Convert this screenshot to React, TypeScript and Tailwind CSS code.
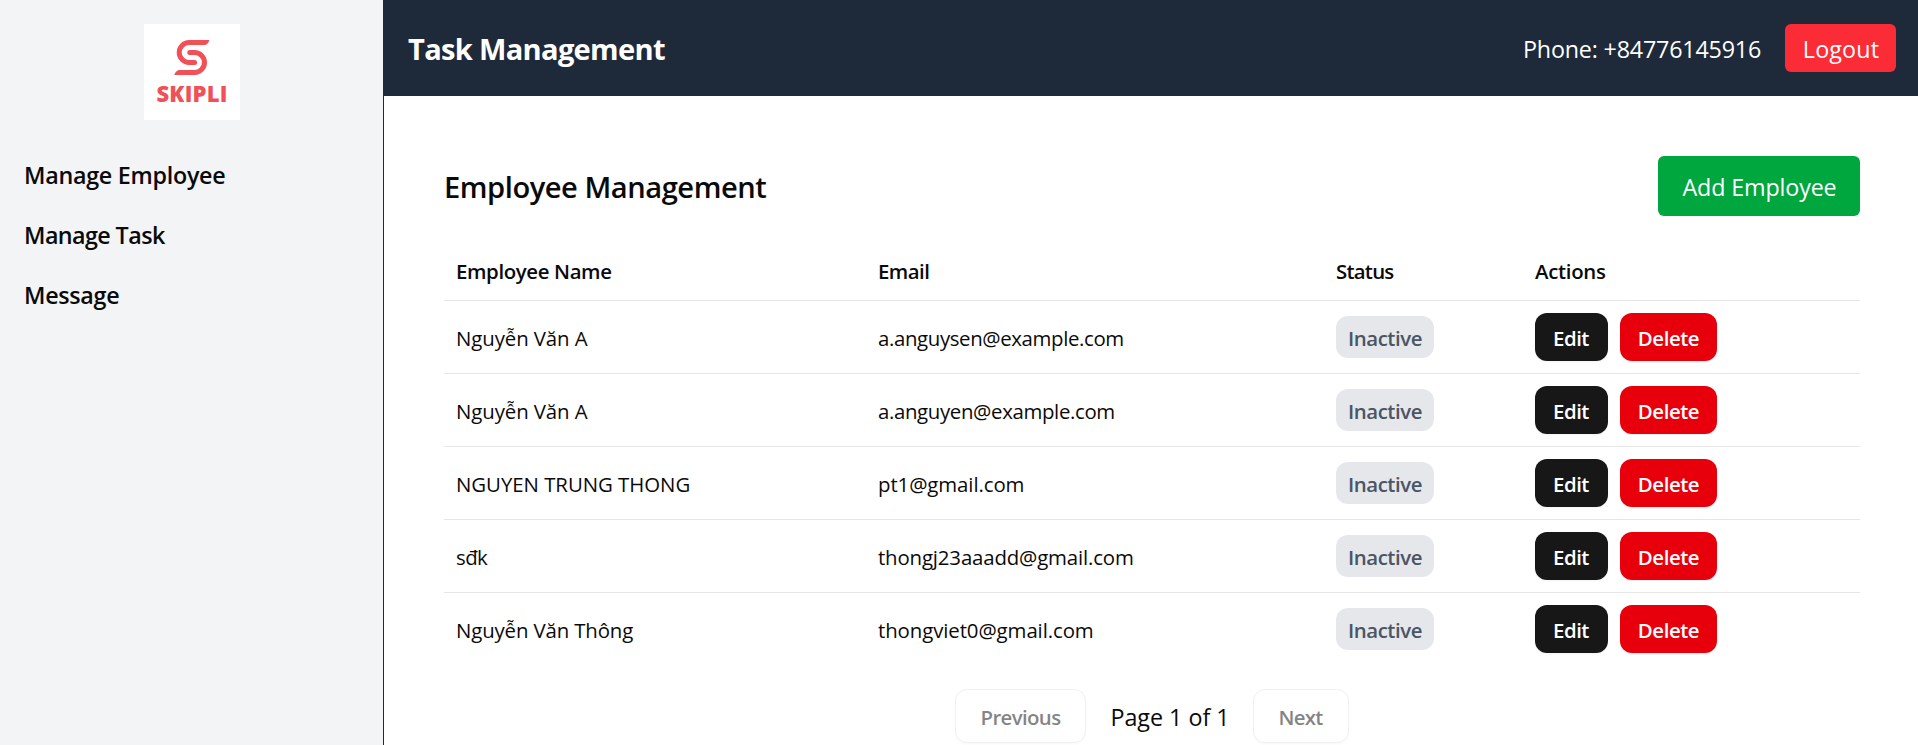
type Employee = {
  name: string;
  nameTracking: string;
  email: string;
  emailTracking: string;
};

const navItems = [
  { label: "Manage Employee", tracking: "tracking-[-0.27px]" },
  { label: "Manage Task", tracking: "tracking-[-0.58px]" },
  { label: "Message", tracking: "tracking-[-0.3px]" },
];

const columns = [
  { label: "Employee Name", tracking: "tracking-[-0.37px]" },
  { label: "Email", tracking: "tracking-[-0.52px]" },
  { label: "Status", tracking: "tracking-[-0.75px]" },
  { label: "Actions", tracking: "tracking-[-0.3px]" },
];

const employees: Employee[] = [
  {
    name: "Nguyễn Văn A",
    nameTracking: "tracking-[-0.09px]",
    email: "a.anguysen@example.com",
    emailTracking: "tracking-[-0.37px]",
  },
  {
    name: "Nguyễn Văn A",
    nameTracking: "tracking-[-0.09px]",
    email: "a.anguyen@example.com",
    emailTracking: "tracking-[-0.35px]",
  },
  {
    name: "NGUYEN TRUNG THONG",
    nameTracking: "tracking-[-0.04px]",
    email: "pt1@gmail.com",
    emailTracking: "tracking-[-0.09px]",
  },
  {
    name: "sđk",
    nameTracking: "tracking-[-0.59px]",
    email: "thongj23aaadd@gmail.com",
    emailTracking: "tracking-[-0.15px]",
  },
  {
    name: "Nguyễn Văn Thông",
    nameTracking: "tracking-[-0.13px]",
    email: "thongviet0@gmail.com",
    emailTracking: "tracking-[-0.09px]",
  },
];

const gridColumns = "grid grid-cols-[422px_458px_199px_337px] items-center";

function Logo() {
  return (
    <div className="flex h-24 w-24 flex-col items-center bg-white pt-4">
      <svg width="36" height="35" viewBox="30 16 36 35" fill="none">
        <path
          d="M61 18.5H45.2a10 10 0 0 0 0 20H50.6M45.8 28.5H50.5a10 10 0 0 1 0 20H35"
          stroke="#f05056"
          strokeWidth="5"
        />
        <path
          d="M60.5 16H65.4C64.6 19 62.8 21 60 21ZM35.5 51H30.2C31.2 48 33 46 36 46Z"
          fill="#f05056"
        />
        <circle cx="50.6" cy="38.5" r="2.5" fill="#f05056" />
        <circle cx="45.8" cy="28.5" r="2.5" fill="#f05056" />
      </svg>
      <span className="mt-1.5 pl-px text-[22px] leading-6 font-extrabold tracking-[0.2px] text-[#f05056]">
        SKIPLI
      </span>
    </div>
  );
}

function Sidebar() {
  return (
    <aside className="flex w-96 shrink-0 flex-col border-r border-gray-800 bg-gray-100 p-6">
      <div className="flex justify-center">
        <Logo />
      </div>
      <nav className="mt-[37px] flex flex-col gap-6">
        {navItems.map((item) => (
          <a
            key={item.label}
            className={`h-9 text-[23.3px] leading-9 font-semibold ${item.tracking}`}
          >
            {item.label}
          </a>
        ))}
      </nav>
    </aside>
  );
}

function Header() {
  return (
    <header className="flex h-24 items-center justify-between bg-gray-800 pr-[22px] pl-6 text-white">
      <h1 className="pt-0.5 text-[29.1px] leading-10 font-bold tracking-[-0.7px]">
        Task Management
      </h1>
      <div className="flex items-center">
        <span className="mr-6 w-[238px] pt-0.5 text-[23.3px] leading-9 tracking-[-0.19px] whitespace-nowrap">
          Phone: +84776145916
        </span>
        <button className="h-12 w-[111px] rounded-md bg-[#fb2c36] pt-0.5 pl-px text-[23.3px] tracking-[0.15px]">
          Logout
        </button>
      </div>
    </header>
  );
}

function Row({ employee, last }: { employee: Employee; last: boolean }) {
  return (
    <div className={`${gridColumns} border-[#e5e5e5] ${last ? "h-[72px]" : "h-[73px] border-b"}`}>
      <span className={`pt-0.5 pl-3 ${employee.nameTracking}`}>{employee.name}</span>
      <span className={`pt-0.5 pl-3 ${employee.emailTracking}`}>{employee.email}</span>
      <div className="pl-3">
        <span className="flex h-[42px] w-[98px] items-center justify-center rounded-xl bg-gray-200 pt-0.5 font-semibold tracking-[-0.45px] text-gray-600">
          Inactive
        </span>
      </div>
      <div className="flex gap-3 pl-3 font-semibold text-white">
        <button className="h-12 w-[73px] rounded-xl bg-[#171717] pt-0.5 pr-px tracking-[-0.5px] shadow-xs">
          Edit
        </button>
        <button className="h-12 w-[97px] rounded-xl bg-[#e7000b] pt-0.5 tracking-[-0.42px] shadow-xs">
          Delete
        </button>
      </div>
    </div>
  );
}

function Pagination() {
  return (
    <div className="mt-6 ml-[511px] flex items-center">
      <button
        disabled
        className="h-[54px] w-[131px] rounded-xl border border-[#e5e5e5] bg-white pt-0.5 font-semibold tracking-[-0.64px] opacity-50 shadow-xs"
      >
        Previous
      </button>
      <span className="w-[167px] pt-0.5 pl-px text-center text-[23.3px] tracking-[-0.02px]">
        Page 1 of 1
      </span>
      <button
        disabled
        className="h-[54px] w-24 rounded-xl border border-[#e5e5e5] bg-white pt-0.5 pr-px font-semibold tracking-[-0.8px] opacity-50 shadow-xs"
      >
        Next
      </button>
    </div>
  );
}

export default function App() {
  return (
    <div className="flex h-[745px] w-full overflow-hidden bg-white font-['Open_Sans','Noto_Sans',sans-serif] text-[#0a0a0a]">
      <Sidebar />
      <div className="flex min-w-0 flex-1 flex-col">
        <Header />
        <main className="pt-[60px] pr-[58px] pl-[60px]">
          <div className="flex h-[60px] items-center justify-between">
            <h2 className="pt-0.5 text-[29.1px] leading-10 font-semibold tracking-[-0.46px]">
              Employee Management
            </h2>
            <button className="h-[60px] w-[202px] rounded-md bg-[#00a63e] pt-0.5 pl-px text-[23.3px] tracking-[-0.14px] text-white">
              Add Employee
            </button>
          </div>
          <div className="mt-6 text-[20.4px] leading-[30px]">
            <div className={`${gridColumns} h-[61px] border-b border-[#e5e5e5] font-semibold`}>
              {columns.map((column) => (
                <span key={column.label} className={`pt-0.5 pl-3 ${column.tracking}`}>
                  {column.label}
                </span>
              ))}
            </div>
            {employees.map((employee, index) => (
              <Row
                key={employee.email}
                employee={employee}
                last={index === employees.length - 1}
              />
            ))}
            <Pagination />
          </div>
        </main>
      </div>
    </div>
  );
}
